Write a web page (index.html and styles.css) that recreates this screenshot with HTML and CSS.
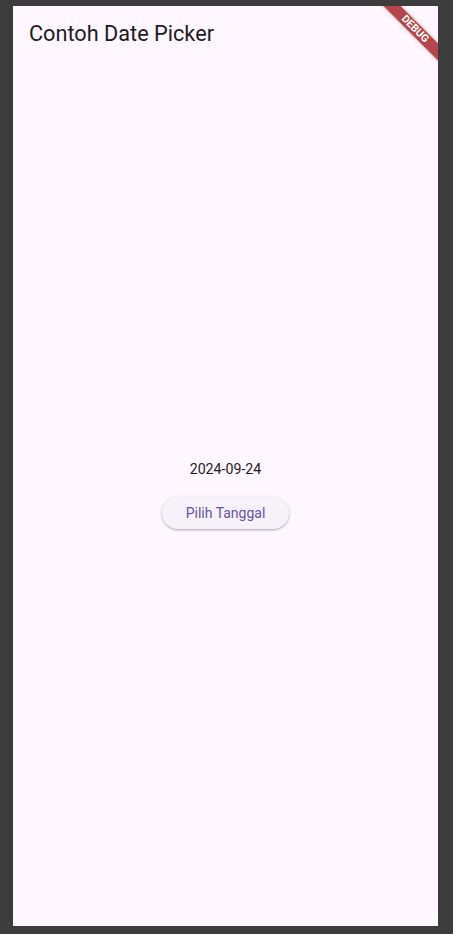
FILE: index.html
```html
<!DOCTYPE html>
<html lang="id">
<head>
<meta charset="utf-8">
<title>Contoh Date Picker</title>
<link rel="stylesheet" href="styles.css">
</head>
<body>
  <div class="screen">
    <header class="appbar">
      <h1 class="title">Contoh Date Picker</h1>
    </header>
    <main class="content">
      <p class="date">2024-09-24</p>
      <button class="pick" type="button">Pilih Tanggal</button>
    </main>
    <div class="debug">DEBUG</div>
  </div>
</body>
</html>
```
FILE: styles.css
```css
html, body {
  margin: 0;
  padding: 0;
  height: 934px;
  overflow: hidden;
}
body {
  background: #3c3c3c;
  font-family: Roboto, "Liberation Sans", sans-serif;
}
.screen {
  position: relative;
  overflow: hidden;
  margin: 6px 0 0 13px;
  width: 425px;
  height: 920px;
  background: #fef7ff;
  display: flex;
  flex-direction: column;
}
.appbar {
  height: 56px;
  flex: 0 0 56px;
  display: flex;
  align-items: center;
  padding: 0 16px;
}
.title {
  margin: 0;
  font-size: 21.7px;
  font-weight: 400;
  line-height: 28px;
  color: #1d1b20;
}
.content {
  flex: 1;
  display: flex;
  flex-direction: column;
  align-items: center;
  justify-content: center;
}
.date {
  margin: 0;
  font-size: 14.2px;
  line-height: 20px;
  color: #1d1b20;
}
.pick {
  margin-top: 18px;
  height: 32px;
  width: 127px;
  padding: 0;
  border: none;
  border-radius: 16px;
  background: #f7f2fa;
  color: #6750a4;
  font-family: Roboto, "Liberation Sans", sans-serif;
  font-size: 14px;
  font-weight: 400;
  box-shadow: 0 1px 2px rgba(0,0,0,0.22), 0 1px 3px 1px rgba(0,0,0,0.08);
}
.debug {
  position: absolute;
  left: 342px;
  top: 17px;
  width: 120px;
  height: 12px;
  transform: rotate(45deg);
  background: #b5474c;
  box-shadow: 0 0 4px rgba(0,0,0,0.3);
  color: #fff;
  font-family: Roboto, "Liberation Sans", sans-serif;
  font-size: 10.5px;
  font-weight: 700;
  line-height: 12px;
  text-align: center;
}
```
